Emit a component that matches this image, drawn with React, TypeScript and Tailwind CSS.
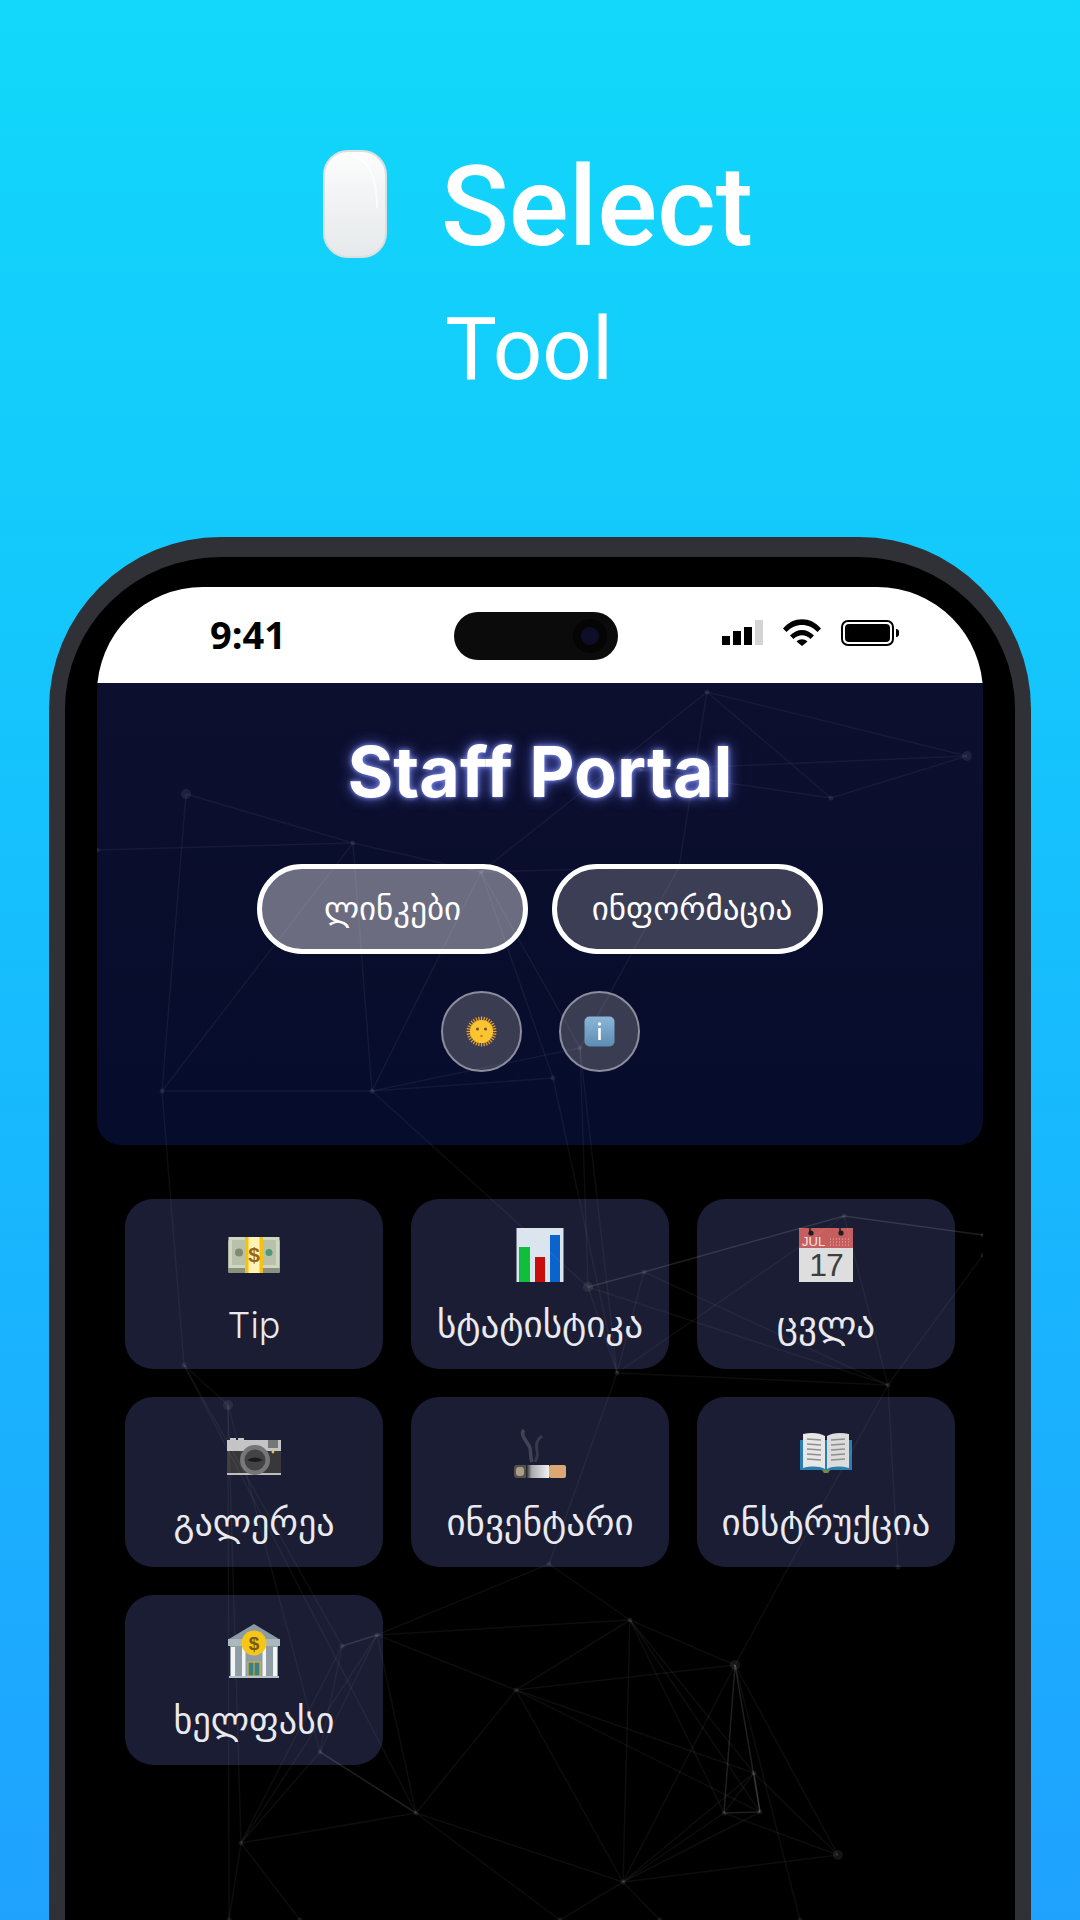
import React from "react";

const GEORGIAN = "font-['DejaVu_Sans','Noto_Sans',sans-serif]";

// network overlay, coordinates are page pixels
const nodes: Record<string, [number, number]> = {
  a: [377, 1635], b: [342, 1646], c: [630, 1620], d: [516, 1690], e: [735, 1665], f: [320, 1752], g: [416, 1813],
  h: [241, 1843], i: [623, 1882], j: [724, 1813], k: [760, 1812], l: [754, 1773], m: [838, 1855], n: [549, 1564],
  o: [184, 1365], p: [228, 1405], q: [588, 1287], r: [644, 1272], s: [617, 1373], t: [844, 1216], u: [983, 1235],
  v: [888, 1385], w: [983, 1255], x: [707, 692], y: [967, 756], z: [831, 798], A: [186, 794], B: [481, 872],
  C: [353, 843], D: [372, 1091], E: [553, 1078], F: [580, 1048], G: [679, 867], H: [162, 1091], I: [898, 1567],
  J: [229, 1920], K: [560, 1920], L: [300, 1920], M: [660, 1920], N: [800, 1920], O: [97, 850], P: [640, 770],
};

const edges = [
  "ad", "ac", "de", "dc", "ce", "nc", "na", "dg", "di", "dl", "dk", "cl", "ck", "cj", "ci", "ei", "em", "li", "ji", "ki", "mi", "gi", "lm", "jm", "lj",
  "gh", "bf", "ah", "fh", "bh", "af", "ag", "pf", "ph", "op", "ob", "og", "sn", "st", "sv", "qs", "rs", "rv", "qv", "tv", "vw", "vI", "ev", "pJ", "hJ", "hL",
  "iM", "iK", "gK", "eN", "xy", "xz", "yz", "xG", "xB", "AC", "CB", "BG", "BE", "BF", "CD", "DE", "DF", "DH", "DB", "HC", "HA", "Ho", "Es", "Fs", "Fq", "GF", "OC", "Pz", "Py", "Dq",
];

// brighter ones in the reference
const strongEdges = ["fg", "ej", "ek", "jk", "lk", "ab", "rq", "rt", "tu"];

const Network = () => (
  <svg viewBox="97 587 886 1333" className="absolute inset-0 z-10 h-[1333px] w-[886px] pointer-events-none blur-[0.5px]">
    {edges.map((edge) => {
      const p = nodes[edge[0]];
      const q = nodes[edge[1]];
      return <line key={edge} x1={p[0]} y1={p[1]} x2={q[0]} y2={q[1]} stroke="#ffffff" strokeOpacity={0.05} strokeWidth={1.5} />;
    })}
    {strongEdges.map((edge) => {
      const p = nodes[edge[0]];
      const q = nodes[edge[1]];
      return <line key={edge} x1={p[0]} y1={p[1]} x2={q[0]} y2={q[1]} stroke="#ffffff" strokeOpacity={0.12} strokeWidth={1.5} />;
    })}
    {Object.entries(nodes).map(([key, p]) => (
      <circle key={key} cx={p[0]} cy={p[1]} r={"yAempq".includes(key) ? 5 : 2.5} fill="#ffffff" fillOpacity={0.08} />
    ))}
  </svg>
);

const MouseIcon = () => (
  <svg width="64" height="108" viewBox="0 0 64 108">
    <defs>
      <linearGradient id="mouseFill" x1="0" y1="0" x2="0" y2="1">
        <stop offset="0" stopColor="#fdfdfd" />
        <stop offset="0.5" stopColor="#f0f2f3" />
        <stop offset="1" stopColor="#e6e9eb" />
      </linearGradient>
    </defs>
    <rect x="1" y="1" width="62" height="106" rx="24" fill="url(#mouseFill)" stroke="#dcdfe0" strokeWidth="2" />
    <path d="M30 6c16 4 24 22 24 52" stroke="#ffffff" strokeWidth="2" fill="none" opacity="0.7" />
  </svg>
);

const SunIcon = () => (
  <svg width="31" height="31" viewBox="0 0 31 31">
    {Array.from({ length: 32 }).map((_, idx) => (
      <line key={idx} x1="15.5" y1="0.5" x2="15.5" y2="6" stroke="#f5a623" strokeWidth="1.200" transform={`rotate(${idx * 11.25} 15.5 15.5)`} />
    ))}
    <circle cx="15.5" cy="15.5" r="11.5" fill="#fbc531" />
    <circle cx="11.5" cy="13" r="1.500" fill="#6d5324" />
    <circle cx="19.5" cy="13" r="1.500" fill="#6d5324" />
    <circle cx="15.5" cy="20" r="1.300" fill="#c9801b" />
  </svg>
);

const InfoIcon = () => (
  <svg width="31" height="31" viewBox="0 0 31 31">
    <defs>
      <linearGradient id="infoFill" x1="0" y1="0" x2="0" y2="1">
        <stop offset="0" stopColor="#8ab6d8" />
        <stop offset="1" stopColor="#5d8db3" />
      </linearGradient>
    </defs>
    <rect x="0.5" y="0.5" width="30" height="30" rx="5" fill="url(#infoFill)" />
    <circle cx="15.500" cy="8" r="1.700" fill="#ffffff" />
    <rect x="14.200" y="12" width="2.600" height="12" fill="#ffffff" />
  </svg>
);

const MoneyIcon = () => (
  <svg width="54" height="54" viewBox="0 0 54 54">
    <rect x="1" y="12" width="52" height="33" rx="1" fill="#8b917f" />
    <rect x="1.500" y="9" width="51" height="31" fill="#d0d6c2" />
    <rect x="5" y="12" width="44" height="25" fill="#b9c2a9" />
    <circle cx="12" cy="24.500" r="4" fill="#7f8a72" />
    <circle cx="42" cy="24.500" r="3.500" fill="#4f9a7a" />
    <rect x="18" y="9" width="18" height="36" fill="#fff2b5" />
    <rect x="18" y="9" width="3.500" height="36" fill="#f5c116" />
    <rect x="32.500" y="9" width="3.500" height="36" fill="#f5c116" />
    <text x="27" y="34" textAnchor="middle" fontSize="21" fontWeight="700" fontFamily="Liberation Sans, sans-serif" fill="#96650f">$</text>
  </svg>
);

const ChartIcon = () => (
  <svg width="54" height="54" viewBox="0 0 54 54">
    <rect x="3.500" y="0" width="47" height="54" fill="#dbe5ee" />
    <rect x="6" y="19" width="11" height="35" fill="#0fbf3b" />
    <rect x="22" y="29" width="10" height="25" fill="#c90d0d" />
    <rect x="37" y="7" width="10" height="47" fill="#0b63ce" />
  </svg>
);

const CalendarIcon = () => (
  <svg width="54" height="54" viewBox="0 0 54 54">
    <rect x="0" y="0" width="54" height="20" fill="#c65e5e" />
    <rect x="0" y="20" width="54" height="34" fill="#dedede" />
    <path d="M11 0v5M41 0v5" stroke="#1c1c24" strokeWidth="1.500" />
    <circle cx="12" cy="5" r="2.600" fill="#1c1c24" />
    <circle cx="42" cy="5" r="2.600" fill="#1c1c24" />
    <text x="3" y="18" fontSize="13" fontFamily="Liberation Sans, sans-serif" fill="#f5e3e3">JUL</text>
    <path d="M31 11h20M31 14h20M31 17h20" stroke="#e6b4b3" strokeWidth="1" strokeDasharray="1 2" />
    <text x="27" y="48" textAnchor="middle" fontSize="32" letterSpacing="-1" fontFamily="Liberation Sans, sans-serif" fill="#3f3f42">17</text>
  </svg>
);

const CameraIcon = () => (
  <svg width="54" height="54" viewBox="0 0 54 54">
    <rect x="3" y="12" width="6" height="4" fill="#c8c8c8" />
    <rect x="11" y="12" width="6" height="4" fill="#c8c8c8" />
    <rect x="0" y="14" width="54" height="11" fill="#c4c4c4" />
    <rect x="0" y="25" width="54" height="23" fill="#38383a" />
    <rect x="0" y="47" width="54" height="2" fill="#bdbdbd" />
    <rect x="41" y="14" width="10" height="8" fill="#777777" />
    <circle cx="28" cy="34" r="15" fill="#75757a" />
    <circle cx="28" cy="34" r="10.500" fill="#434345" />
    <path d="M20 34q8-5 16 0q-8 4-16 0" fill="#1b1b1c" />
    <circle cx="46" cy="26" r="1.400" fill="#e5c04c" />
  </svg>
);

const CigaretteIcon = () => (
  <svg width="54" height="54" viewBox="0 0 54 54">
    <defs>
      <linearGradient id="cigBody" x1="0" y1="0" x2="1" y2="0">
        <stop offset="0" stopColor="#1b1b1e" />
        <stop offset="0.25" stopColor="#aaaab0" />
        <stop offset="1" stopColor="#f2f2f4" />
      </linearGradient>
    </defs>
    <path d="M11 4c-5 5 4 12 6 18 1 5 0 9 2 14" stroke="#5b5e6e" strokeWidth="3.500" fill="none" opacity="0.6" />
    <path d="M29 10c-6 4-6 10-5 15 1 3 0 7-2 11" stroke="#4a4d5e" strokeWidth="3" fill="none" opacity="0.6" />
    <rect x="1" y="39" width="15" height="13" rx="3" fill="#55524c" />
    <rect x="3" y="41" width="8" height="9" rx="3" fill="#a99f8a" />
    <rect x="13" y="39" width="23" height="13" fill="url(#cigBody)" />
    <rect x="36" y="39" width="17" height="13" rx="2" fill="#dba873" />
  </svg>
);

const BookIcon = () => (
  <svg width="54" height="54" viewBox="0 0 54 54">
    <path d="M1 14v30h21l5 2 5-2h21V14z" fill="#2b7fb0" />
    <path d="M4 8c9-2 17-1 22 2v33c-6-3-14-3-22-1z" fill="#e7e7e7" />
    <path d="M50 8c-9-2-17-1-22 2v33c6-3 14-3 22-1z" fill="#dcdcdc" />
    <path d="M8 13l14 1M8 18l14 1M8 23l14 1M8 28l14 1M8 33l14 1M32 14l14-1M32 19l14-1M32 24l14-1M32 29l14-1M32 34l14-1" stroke="#8f8f8f" strokeWidth="1.400" />
    <path d="M23 44h8l-2 3h-4z" fill="#6f8f3f" />
  </svg>
);

const BankIcon = () => (
  <svg width="54" height="54" viewBox="0 0 54 54">
    <path d="M27 0L52 15H2z" fill="#8c9ba3" />
    <rect x="1" y="15" width="52" height="7" fill="#aab7bc" />
    <rect x="3" y="22" width="48" height="30" fill="#8f9ea5" />
    <rect x="4" y="23" width="4" height="29" fill="#f2f4f5" />
    <rect x="15" y="23" width="3.500" height="29" fill="#f2f4f5" />
    <rect x="35.500" y="23" width="3.500" height="29" fill="#f2f4f5" />
    <rect x="46" y="23" width="4" height="29" fill="#f2f4f5" />
    <rect x="21" y="38" width="12" height="14" fill="#3d7f88" stroke="#d8b23a" strokeWidth="1.200" />
    <path d="M27 38v14" stroke="#d8b23a" strokeWidth="1" />
    <rect x="2" y="52" width="50" height="2" fill="#b7c2c6" />
    <circle cx="27" cy="19" r="12.500" fill="#f5c518" />
    <text x="27" y="26" textAnchor="middle" fontSize="19" fontWeight="700" fontFamily="Liberation Sans, sans-serif" fill="#7a5a10">$</text>
  </svg>
);

const SignalIcon = () => (
  <div className="flex items-end gap-[3px]">
    <div className="w-2 h-[9px] bg-black" />
    <div className="w-2 h-[14px] bg-black" />
    <div className="w-2 h-[18px] bg-black" />
    <div className="w-2 h-[25px] bg-[#d4d4d4]" />
  </div>
);

const WifiIcon = () => (
  <svg width="38" height="27" viewBox="0 0 38 27">
    <path d="M0 9.500C10-3 28-3 38 9.500l-3.500 3.500C26 3.500 12 3.500 3.500 13z" fill="#000" />
    <path d="M7 16.500c7-7.500 17-7.500 24 0l-3.500 3.500c-5-5-12-5-17 0z" fill="#000" />
    <path d="M13.500 22.500c3.500-3 7.500-3 11 0L19 27z" fill="#000" />
  </svg>
);

const BatteryIcon = () => (
  <div className="flex items-center gap-[2px]">
    <div className="w-[53px] h-[26px] rounded-[7px] border-2 border-black p-[2px]">
      <div className="w-full h-full rounded-[4px] bg-black" />
    </div>
    <div className="w-[3px] h-[8px] rounded-r-full bg-black" />
  </div>
);

const items = [
  { label: "Tip", icon: <MoneyIcon />, font: "font-['Inter',sans-serif] font-light text-[36px]" },
  { label: "სტატისტიკა", icon: <ChartIcon />, font: `${GEORGIAN} text-[37px]` },
  { label: "ცვლა", icon: <CalendarIcon />, font: `${GEORGIAN} text-[37px]` },
  { label: "გალერეა", icon: <CameraIcon />, font: `${GEORGIAN} text-[36px]` },
  { label: "ინვენტარი", icon: <CigaretteIcon />, font: `${GEORGIAN} text-[37px]` },
  { label: "ინსტრუქცია", icon: <BookIcon />, font: `${GEORGIAN} text-[37px]` },
  { label: "ხელფასი", icon: <BankIcon />, font: `${GEORGIAN} text-[36px]` },
];

const App = () => {
  return (
    <div className="h-[1920px] w-[1080px] overflow-hidden bg-gradient-to-b from-[#12d8fa] to-[#1fa2ff]">
      {/* Heading */}
      <div className="h-[537px] pt-[150px] flex flex-col items-center text-white font-['Roboto',sans-serif]">
        <div className="flex items-center gap-[54px] h-[108px] ml-[-4px]">
          <MouseIcon />
          <span className="mt-[6px] text-[112px] font-medium leading-none">Select</span>
        </div>
        <span className="mt-[48px] ml-[-22px] text-[87px] leading-none">Tool</span>
      </div>

      {/* Phone */}
      <div className="ml-[49px] w-[982px] h-[1400px] rounded-t-[172px] border-x-[16px] border-t-[20px] border-[#2f3136] bg-black pt-[30px] px-[32px]">
        <div className="relative w-[886px] h-[1333px] rounded-t-[106px] overflow-hidden bg-black">
          <Network />

          {/* Status bar */}
          <div className="relative h-[96px] bg-white flex items-center pl-[113px] pr-[84px]">
            <span className="text-[38px] font-bold text-black leading-none mt-[-2px] font-['Open_Sans',sans-serif]">9:41</span>
            <div className="absolute left-[357px] top-[25px] w-[164px] h-[48px] rounded-full bg-[#0b0b0b] flex items-center justify-end pr-[11px]">
              <div className="w-[34px] h-[34px] rounded-full bg-[#050505] flex items-center justify-center">
                <div className="w-[18px] h-[18px] rounded-full bg-[#0d0f2a]" />
              </div>
            </div>
            <div className="ml-auto flex items-center gap-[20px] mt-[-5px]">
              <SignalIcon />
              <WifiIcon />
              <BatteryIcon />
            </div>
          </div>

          {/* Header */}
          <div className="h-[462px] rounded-b-[24px] bg-gradient-to-b from-[#0d0f2e] to-[#060c2c] flex flex-col items-center">
            <h1 className="mt-[46px] h-[85px] text-[70px] leading-[85px] font-bold text-white font-['Inter',sans-serif] [text-shadow:0_0_5px_#8f9cf5,0_0_14px_#5a68d8]">
              Staff Portal
            </h1>
            <div className={`mt-[50px] flex gap-[24px] text-white text-[33px] ${GEORGIAN}`}>
              <div className="w-[271px] h-[90px] rounded-full border-[5px] border-white bg-[#6b6c80] flex items-center justify-center">ლინკები</div>
              <div className="w-[271px] h-[90px] rounded-full border-[5px] border-white bg-[#3b3e55] flex items-center justify-center pl-[9px]">ინფორმაცია</div>
            </div>
            <div className="mt-[37px] flex gap-[37px]">
              <div className="w-[81px] h-[81px] rounded-full border-2 border-[#8c8d9c] bg-[#3a3c52] flex items-center justify-center"><SunIcon /></div>
              <div className="w-[81px] h-[81px] rounded-full border-2 border-[#8c8d9c] bg-[#3a3c52] flex items-center justify-center"><InfoIcon /></div>
            </div>
          </div>

          {/* Menu */}
          <div className="grid grid-cols-3 gap-[28px] px-[28px] pt-[54px]">
            {items.map((item) => (
              <div key={item.label} className="h-[170px] rounded-[28px] bg-[#1a1d33] pt-[29px] flex flex-col items-center">
                {item.icon}
                <span className={`mt-[18px] leading-[50px] text-[#e9e9ef] ${item.font}`}>{item.label}</span>
              </div>
            ))}
          </div>
        </div>
      </div>
    </div>
  );
};

export default App;
